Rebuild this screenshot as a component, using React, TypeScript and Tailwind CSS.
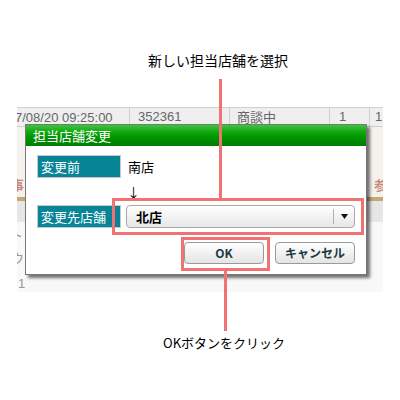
import React from 'react';

const jp = { fontFamily: '"Noto Sans CJK JP", "Noto Sans", sans-serif' };

const Backdrop = () => (
  <div className="flex flex-col h-full overflow-hidden text-[13px] text-[#666]">
    <div className="h-[20px] flex shrink-0 bg-[#efefef] border-t border-b border-[#d0d0d0]">
      <div className="w-[113px] border-r border-[#d0d0d0] overflow-hidden whitespace-nowrap leading-[18px]">
        <span className="ml-[-2px]" style={{ fontFamily: '"Liberation Sans", sans-serif' }}>7/08/20 09:25:00</span>
      </div>
      <div className="w-[100px] border-r border-[#d0d0d0] pl-[8px] leading-[18px]" style={{ fontFamily: '"Liberation Sans", sans-serif' }}>352361</div>
      <div className="w-[100px] border-r border-[#d0d0d0] pl-[7px] leading-[18px]">商談中</div>
      <div className="w-[40px] border-r border-[#d0d0d0] pl-[9px] leading-[18px]" style={{ fontFamily: '"Liberation Sans", sans-serif' }}>1</div>
      <div className="flex-1 pl-[5px] leading-[18px]" style={{ fontFamily: '"Liberation Sans", sans-serif' }}>1</div>
    </div>
    <div className="h-[70px] shrink-0 bg-[#f5f2ee] flex items-end justify-between pb-[3px]">
      <span className="text-[#c9897a] font-bold ml-[-6px]">事</span>
      <span className="text-[#c9897a] font-bold mr-[-4px]">参</span>
    </div>
    <div className="h-[4px] shrink-0 bg-[#c6a675]" />
    <div className="h-[21px] shrink-0 bg-[#e6e6e6]" />
    <div className="flex-1 bg-[#f8f8f8] flex flex-col text-[#999] pt-[3px]">
      <span className="h-[23px] ml-[-7px]">ト</span>
      <span className="h-[26px] ml-[-6px]">ウ</span>
      <span className="ml-[1px]" style={{ fontFamily: '"Liberation Sans", sans-serif' }}>1</span>
    </div>
  </div>
);

const Label = ({ children }: { children: React.ReactNode }) => (
  <div className="w-[84px] h-[23px] shrink-0 border border-[#c8c8c8] bg-[#078596] text-white text-[13px] leading-[21px] pl-[3px]">
    {children}
  </div>
);

const Btn = ({ children }: { children: React.ReactNode }) => (
  <button className="w-[80px] h-[22px] rounded-[4px] border border-[#9a9a9a] bg-[linear-gradient(to_bottom,#ffffff,#e4e4e4)] text-[12px] font-bold text-[#1b3a42] leading-[20px]">
    {children}
  </button>
);

const Dialog = () => (
  <div className="absolute left-[8px] top-[17px] w-[342px] h-[151px] bg-white border border-[#777] shadow-[3px_3px_3px_rgba(0,0,0,0.55)] flex flex-col">
    <div className="h-[21px] shrink-0 bg-[linear-gradient(to_bottom,#3ec43e_0%,#0ea80e_35%,#009400_60%,#007c00_100%)] text-white text-[13px] leading-[21px] pl-[7px]">
      担当店舗変更
    </div>
    <div className="flex flex-col px-[11px] pt-[9px]">
      <div className="flex items-center">
        <Label>変更前</Label>
        <span className="ml-[7px] text-[13px] text-black">南店</span>
      </div>
      <div className="h-[27px] flex items-center pl-[90px] text-[13px] text-black">↓</div>
      <div className="flex items-center">
        <Label>変更先店舗</Label>
        <div className="ml-[5px] flex-1 h-[23px] rounded-[4px] border border-[#a8a8a8] bg-[linear-gradient(to_bottom,#ffffff,#e6e6e6)] flex items-center">
          <span className="flex-1 pl-[9px] text-[13px] font-bold text-black">北店</span>
          <div className="w-[1px] h-[15px] bg-[#b0b0b0]" />
          <div className="w-[20px] flex justify-center">
            <svg width="7" height="5" viewBox="0 0 7 5"><path d="M0 0h7L3.5 5z" fill="#111" /></svg>
          </div>
        </div>
      </div>
      <div className="flex justify-end gap-[11px] mt-[14px]">
        <Btn>OK</Btn>
        <Btn>キャンセル</Btn>
      </div>
    </div>
  </div>
);

export default function App() {
  return (
    <div className="w-[400px] h-[400px] bg-white relative overflow-hidden" style={jp}>
      <div className="h-[107px] pt-[50px] pl-[148px] text-[14px] leading-[20px] text-black">新しい担当店舗を選択</div>
      <div className="ml-[17px] w-[366px] h-[185px] relative">
        <Backdrop />
        <Dialog />
      </div>
      <div className="mt-[41px] pl-[163px] text-[13px] leading-[20px] text-black">OKボタンをクリック</div>

      {/* annotations */}
      <div className="absolute left-[219px] top-[79px] w-[3px] h-[120px] bg-[#f07272]" />
      <div className="absolute left-[112px] top-[198px] w-[252px] h-[37px] border-[3px] border-[#f07272]" />
      <div className="absolute left-[181px] top-[237px] w-[89px] h-[34px] border-[3px] border-[#f07272]" />
      <div className="absolute left-[224px] top-[271px] w-[3px] h-[60px] bg-[#f07272]" />
    </div>
  );
}
